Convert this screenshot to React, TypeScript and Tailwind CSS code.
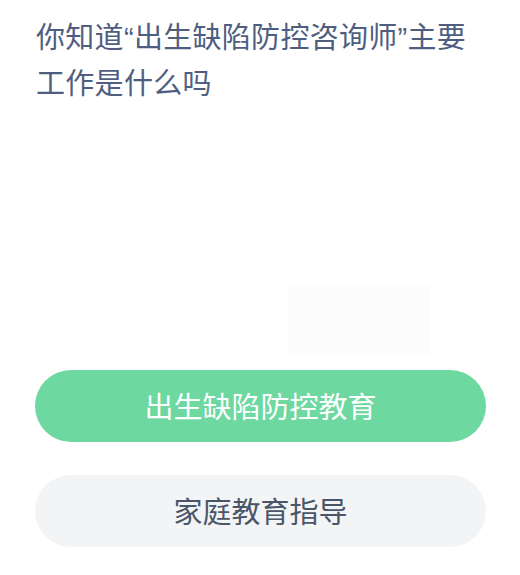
export default function App() {
  const options = [
    { label: "出生缺陷防控教育", selected: true },
    { label: "家庭教育指导", selected: false },
  ];

  // latin quotes are narrow in the original, so give them a latin face
  const q = (c: string) => (
    <span style={{ fontFamily: '"Liberation Sans", sans-serif' }}>{c}</span>
  );

  return (
    <div
      className="min-h-[575px] w-[520px] bg-white pl-[35px] pr-[34px] pt-[12px]"
      style={{ fontFamily: '"Noto Sans CJK SC", "Noto Sans", sans-serif' }}
    >
      <h1 className="h-[92px] overflow-hidden pl-[1px] text-[29px] leading-[46px] font-normal tracking-[0.3px] text-[#4f5e80]">
        <span className="block h-[46px] whitespace-nowrap">
          你知道{q("“")}出生缺陷防控咨询师{q("”")}主要
        </span>
        <span className="block">工作是什么吗</span>
      </h1>

      {/* faint illustration area behind the question */}
      <div className="flex h-[266px] items-end justify-center pb-[16px] pl-[197px]">
        <div className="h-[68px] w-[142px] bg-[#fcfcfc]" />
      </div>

      <div className="flex flex-col gap-[33px]">
        {options.map((o) => (
          <button
            key={o.label}
            className={`flex h-[72px] w-full items-center justify-center rounded-full text-[29px] ${
              o.selected
                ? "bg-[#6dd89f] text-white"
                : "bg-[#f3f4f6] text-[#4b5568]"
            }`}
          >
            {o.label}
          </button>
        ))}
      </div>
    </div>
  );
}
